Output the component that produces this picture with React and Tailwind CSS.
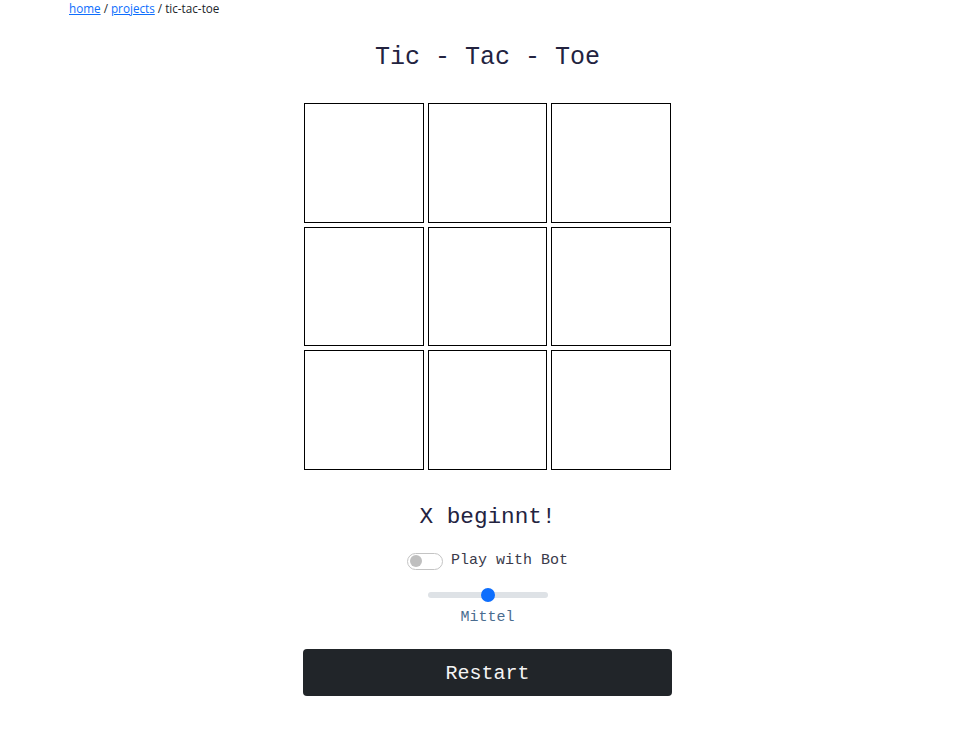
import React, { useState } from "react";

const mono = { fontFamily: '"Liberation Mono", "DejaVu Sans Mono", monospace' };

// Single board cell
function Cell({ value, onClick }) {
  return (
    <button
      onClick={onClick}
      className="w-full aspect-square border border-black bg-white text-5xl"
      style={mono}
    >
      {value}
    </button>
  );
}

const App = () => {
  const [board, setBoard] = useState(Array(9).fill(null));
  const [bot, setBot] = useState(false);

  return (
    <div className="min-h-screen bg-white">
      {/* breadcrumb */}
      <div
        className="pl-[69px] pt-[1px] text-[11.7px] leading-[15px] text-[#212529]"
        style={{ fontFamily: '"Open Sans", "Liberation Sans", sans-serif' }}
      >
        <a href="#" className="text-[#0d6efd] underline">home</a> /{" "}
        <a href="#" className="text-[#0d6efd] underline">projects</a> / tic-tac-toe
      </div>

      <div className="flex flex-col items-center pl-[8px]" style={mono}>
        <h1 className="mt-[27px] text-[25px] leading-[30px] text-[#23233f]">
          Tic - Tac - Toe
        </h1>

        <div className="mt-[30px] grid w-[367px] grid-cols-3 gap-1">
          {board.map((v, i) => (
            <Cell
              key={i}
              value={v}
              onClick={() => {
                const b = [...board];
                b[i] = v ? v : "X";
                setBoard(b);
              }}
            />
          ))}
        </div>

        <p className="mt-[33px] text-[22.7px] leading-[28px] text-[#23233f]">X beginnt!</p>

        <div className="mt-[20px] flex h-[20px] items-center gap-2">
          <button
            onClick={() => setBot(!bot)}
            className="flex h-[17px] w-[36px] items-center rounded-full border border-[#c4c4c4] px-[2px]"
          >
            <span className="h-[12px] w-[12px] rounded-full bg-[#bfbfbf]" />
          </button>
          <span className="text-[15px] text-[#3a3a4a]">Play with Bot</span>
        </div>

        <div className="relative mt-[17px] flex h-[14px] w-[120px] items-center">
          <div className="h-[6px] w-full rounded-full bg-[#dee2e6]" />
          <div className="absolute left-[53px] h-[14px] w-[14px] rounded-full bg-[#0d6efd]" />
        </div>

        <p className="mt-[6px] text-[15px] leading-[20px] text-[#4a6c8f]">Mittel</p>

        <button
          onClick={() => setBoard(Array(9).fill(null))}
          className="mt-[21px] h-[47px] w-[369px] rounded bg-[#212529] pt-[3px] text-[20px] text-[#f4f4f4]"
        >
          Restart
        </button>
      </div>
    </div>
  );
};

export default App;
